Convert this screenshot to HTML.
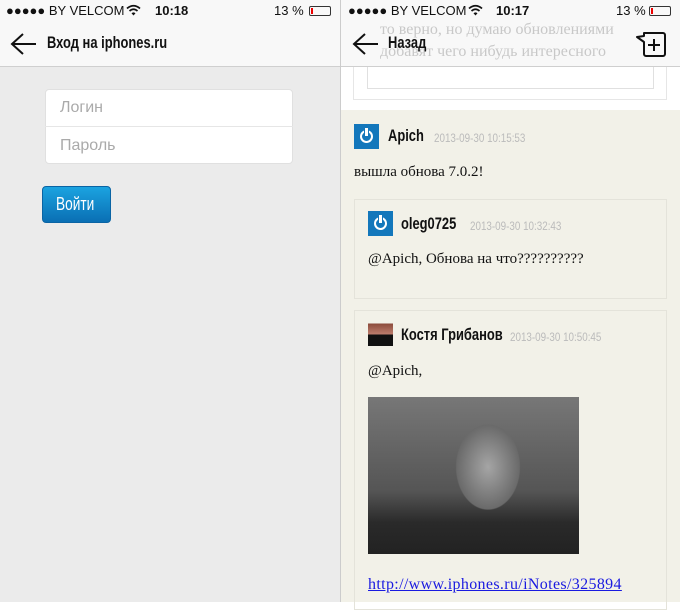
<!DOCTYPE html>
<html><head><meta charset="utf-8"><style>
*{margin:0;padding:0;box-sizing:border-box}
body{width:680px;height:602px;overflow:hidden;position:relative;background:#fff;font-family:"Liberation Sans","DejaVu Sans",sans-serif}
.abs{position:absolute}
.sb{font-size:13px;color:#111;top:3px;white-space:nowrap}
.cond{transform:scaleX(.76);transform-origin:0 0;white-space:nowrap}
.navt{font-weight:bold;font-size:17px;color:#111}
.serif{font-family:"Liberation Serif","DejaVu Serif",serif;color:#111;white-space:nowrap}
.name{font-weight:bold;font-size:17px;color:#111}
.date{font-size:12px;color:#bbb;transform:scaleX(.82)}
.av{width:25px;height:25px;background:#1377bb}
.av:after{content:"";position:absolute;left:6px;top:6px;width:9px;height:9px;border:2.5px solid #fff;border-radius:50%}
.av:before{content:"";position:absolute;left:11px;top:4px;width:3px;height:8px;background:#fff;box-shadow:0 0 0 1px #1377bb;z-index:1}
</style></head><body>
<!-- LEFT -->
<div class="abs" style="left:0;top:0;width:340px;height:602px;background:#ebebeb"></div>
<div class="abs" style="left:0;top:0;width:340px;height:67px;background:#f8f8f8;border-bottom:1px solid #cfcfcf"></div>
<div class="abs sb" style="left:6px">●●●●● BY VELCOM</div>
<svg class="abs" style="left:126px;top:4px" width="15" height="12"><path d="M1 4.5Q7.5-1 14 4.5M3.5 7Q7.5 3.5 11.5 7" stroke="#111" stroke-width="1.8" fill="none"/><path d="M5.5 9.3L7.5 11.5L9.5 9.3Q7.5 7.5 5.5 9.3Z" fill="#111"/></svg>
<div class="abs sb" style="left:155px;font-weight:bold">10:18</div>
<div class="abs sb" style="left:274px">13 %</div>
<div class="abs" style="left:309px;top:6px;width:22px;height:10px;border:1px solid #333;border-radius:2px"><div style="width:2px;height:6px;margin:1px;background:#e00"></div></div>
<svg class="abs" style="left:10px;top:32px" width="28" height="24"><path d="M2 12H26M13 2L2 12L13 22" stroke="#111" stroke-width="2" fill="none"/></svg>
<div class="abs navt cond" style="left:47px;top:33px">Вход на iphones.ru</div>
<div class="abs" style="left:45px;top:89px;width:248px;height:75px;background:#fff;border:1px solid #e0e0e0;border-radius:4px"></div>
<div class="abs" style="left:45px;top:126px;width:248px;height:1px;background:#e6e6e6"></div>
<div class="abs" style="left:60px;top:99px;font-size:16px;color:#aaa">Логин</div>
<div class="abs" style="left:60px;top:137px;font-size:16px;color:#aaa">Пароль</div>
<div class="abs" style="left:42px;top:186px;width:69px;height:37px;border-radius:4px;background:linear-gradient(#1ba3e0,#0a6fb4);border:1px solid #0a64a4"></div>
<div class="abs cond" style="left:56px;top:194px;color:#fff;font-size:18px">Войти</div>
<!-- RIGHT -->
<div class="abs" style="left:340px;top:0;width:1px;height:602px;background:#ccc"></div>
<div class="abs" style="left:341px;top:110px;width:339px;height:492px;background:#f2f1e8"></div>
<div class="abs" style="left:353px;top:40px;width:314px;height:60px;border:1px solid #e6e6e6"></div>
<div class="abs" style="left:367px;top:40px;width:287px;height:49px;border:1px solid #e0e0e0"></div>
<div class="abs" style="left:341px;top:0;width:339px;height:67px;background:#f8f8f8;border-bottom:1px solid #cfcfcf"></div>
<div class="abs serif" style="left:380px;top:19px;font-size:16px;color:#c8c8c8;line-height:22px">то верно, но думаю обновлениями<br>добавят чего нибудь интересного</div>
<div class="abs sb" style="left:348px">●●●●● BY VELCOM</div>
<svg class="abs" style="left:468px;top:4px" width="15" height="12"><path d="M1 4.5Q7.5-1 14 4.5M3.5 7Q7.5 3.5 11.5 7" stroke="#111" stroke-width="1.8" fill="none"/><path d="M5.5 9.3L7.5 11.5L9.5 9.3Q7.5 7.5 5.5 9.3Z" fill="#111"/></svg>
<div class="abs sb" style="left:496px;font-weight:bold">10:17</div>
<div class="abs sb" style="left:616px">13 %</div>
<div class="abs" style="left:649px;top:6px;width:22px;height:10px;border:1px solid #333;border-radius:2px"><div style="width:2px;height:6px;margin:1px;background:#e00"></div></div>
<svg class="abs" style="left:352px;top:32px" width="28" height="24"><path d="M2 12H26M13 2L2 12L13 22" stroke="#111" stroke-width="2" fill="none"/></svg>
<div class="abs navt cond" style="left:388px;top:33px">Назад</div>
<svg class="abs" style="left:634px;top:30px" width="34" height="28"><path d="M10 3H29a2 2 0 0 1 2 2V24a2 2 0 0 1-2 2H12a2 2 0 0 1-2-2V12L3 7L10 6Z" stroke="#111" stroke-width="2" fill="none" stroke-linejoin="round"/><path d="M20 9V21M14 15H26" stroke="#111" stroke-width="2"/></svg>
<div class="abs av" style="left:354px;top:124px"></div>
<div class="abs name cond" style="left:388px;top:126px">Apich</div>
<div class="abs date cond" style="left:434px;top:131px">2013-09-30 10:15:53</div>
<div class="abs serif" style="left:354px;top:164px;font-size:15px">вышла обнова 7.0.2!</div>
<div class="abs" style="left:354px;top:199px;width:313px;height:100px;border:1px solid #e4e3da"></div>
<div class="abs av" style="left:368px;top:211px"></div>
<div class="abs name cond" style="left:401px;top:214px">oleg0725</div>
<div class="abs date cond" style="left:470px;top:219px">2013-09-30 10:32:43</div>
<div class="abs serif" style="left:368px;top:251px;font-size:15px">@Apich, Обнова на что??????????</div>
<div class="abs" style="left:354px;top:310px;width:313px;height:300px;border:1px solid #e4e3da"></div>
<div class="abs" style="left:368px;top:321px;width:25px;height:25px;background:linear-gradient(#f2f1e8 0,#f2f1e8 10%,#8a4a3a 10%,#c08070 55%,#111 55%)"></div>
<div class="abs name cond" style="left:401px;top:325px">Костя Грибанов</div>
<div class="abs date cond" style="left:510px;top:330px">2013-09-30 10:50:45</div>
<div class="abs serif" style="left:368px;top:363px;font-size:15px">@Apich,</div>
<div class="abs" style="left:368px;top:397px;width:211px;height:157px;background:radial-gradient(ellipse 45px 60px at 120px 70px,#a5a5a5,#6a6a6a 70%,transparent 72%),linear-gradient(#777,#555 60%,#2a2a2a 80%,#222)"></div>
<div class="abs serif" style="left:368px;top:576px;font-size:16px;letter-spacing:.35px;color:#1a1ae0;text-decoration:underline">http://www.iphones.ru/iNotes/325894</div>
</body></html>
